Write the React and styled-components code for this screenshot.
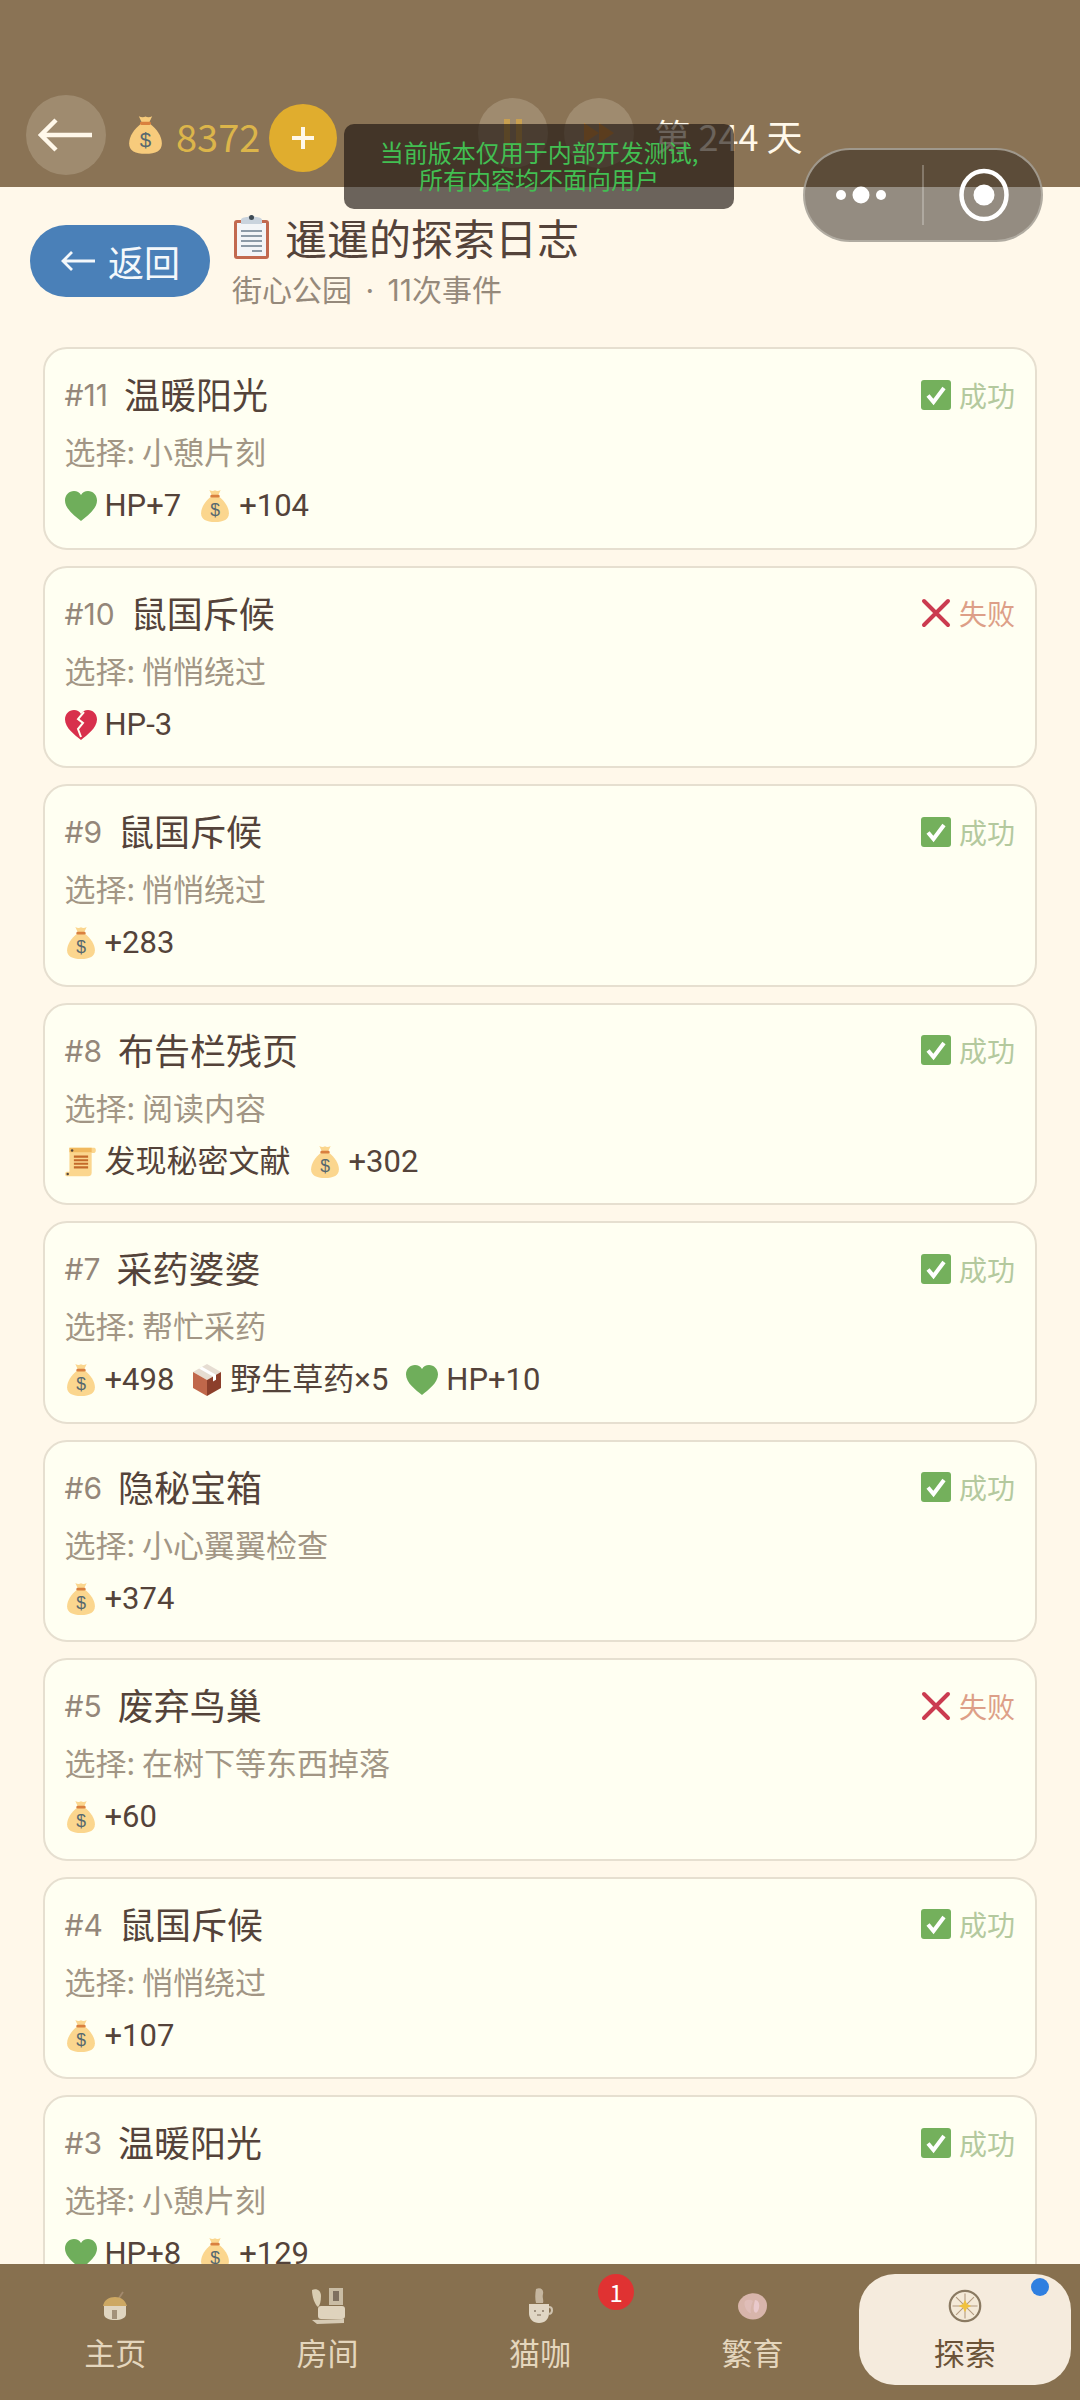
import React from 'react'
import styled, { createGlobalStyle } from 'styled-components'

const GlobalStyle = createGlobalStyle`
  html, body {
    margin: 0;
    padding: 0;
    background: #fff8ea;
  }
  * {
    box-sizing: border-box;
  }
`

const events = [
  { no: 11, title: '温暖阳光', choice: '小憩片刻', ok: true, rewards: [['heart', 'HP+7'], ['bag', '+104']] },
  { no: 10, title: '鼠国斥候', choice: '悄悄绕过', ok: false, rewards: [['broken', 'HP-3']] },
  { no: 9, title: '鼠国斥候', choice: '悄悄绕过', ok: true, rewards: [['bag', '+283']] },
  { no: 8, title: '布告栏残页', choice: '阅读内容', ok: true, rewards: [['scroll', '发现秘密文献'], ['bag', '+302']] },
  { no: 7, title: '采药婆婆', choice: '帮忙采药', ok: true, rewards: [['bag', '+498'], ['box', '野生草药×5'], ['heart', 'HP+10']] },
  { no: 6, title: '隐秘宝箱', choice: '小心翼翼检查', ok: true, rewards: [['bag', '+374']] },
  { no: 5, title: '废弃鸟巢', choice: '在树下等东西掉落', ok: false, rewards: [['bag', '+60']] },
  { no: 4, title: '鼠国斥候', choice: '悄悄绕过', ok: true, rewards: [['bag', '+107']] },
  { no: 3, title: '温暖阳光', choice: '小憩片刻', ok: true, rewards: [['heart', 'HP+8'], ['bag', '+129']] },
]

const BagIcon = ({ w = 32, h = 34, fill = '#fbd68e' }) => (
  <svg width={w} height={h} viewBox="4 2 28 33">
    <path d="M12.500 3c2 1.200 4 1.200 5.500.3 1.500.9 3.500.9 5.500-.3l-3 6.500h-5z" fill={fill} />
    <path d="M14 9.500c-5 4-9.500 10-9.500 16 0 6 5 8.500 13.500 8.500s13.500-2.500 13.500-8.500c0-6-4.500-12-9.500-16z" fill={fill} />
    <rect x="13.500" y="7.500" width="9" height="2.800" rx="1.200" fill="#d9803f" />
    <text x="18" y="28" textAnchor="middle" fontSize="17" fontFamily="'Liberation Sans', sans-serif" fill="#56686f">$</text>
  </svg>
)

const HeartIcon = () => (
  <svg width="32" height="30" viewBox="2 3 32 30">
    <path d="M18 33C12 28 2 21 2 12.500 2 7 6 3 11 3c3 0 5.600 1.500 7 4 1.400-2.500 4-4 7-4 5 0 9 4 9 9.500C34 21 24 28 18 33z" fill="#6fae5b" />
  </svg>
)

const BrokenIcon = () => (
  <svg width="32" height="30" viewBox="2 3 32 30">
    <path d="M18 33C12 28 2 21 2 12.500 2 7 6 3 11 3c3 0 5.600 1.500 7 4 1.400-2.500 4-4 7-4 5 0 9 4 9 9.500C34 21 24 28 18 33z" fill="#d8304c" />
    <path d="M21 5l-6 7 5 4-5 6 3 8" fill="none" stroke="#fffff2" strokeWidth="2" />
  </svg>
)

const ScrollIcon = () => (
  <svg width="32" height="32" viewBox="0 1 36 34">
    <path d="M5 2h28c2 0 2.500 5 0 6h-3v22c0 3-2 4-4 4H2c-2.500 0-2.500-5 0-5h3z" fill="#fbd68e" />
    <path d="M5 2h25v5H5z" fill="#f1b95e" />
    <path d="M10 12h16M10 16h16M10 20h16M10 24h16" stroke="#c46a2a" strokeWidth="2.400" />
    <circle cx="8" cy="5" r="1.400" fill="#55453a" />
    <circle cx="3" cy="31.500" r="1.400" fill="#55453a" />
  </svg>
)

const BoxIcon = () => (
  <svg width="30" height="34" viewBox="4 1 28 34">
    <path d="M18 2l14 8-14 8-14-8z" fill="#e6ddd2" />
    <path d="M4 10l14 8v16L4 26z" fill="#c0674a" />
    <path d="M32 10l-14 8v16l14-8z" fill="#8c3f2b" />
    <path d="M10 6.500l14 8v5l3-1.700v-5L13 4.800z" fill="#fff" />
  </svg>
)

const CheckIcon = () => (
  <svg width="30" height="30" viewBox="0 0 30 30">
    <rect width="30" height="30" rx="3" fill="#74b05c" />
    <path d="M7 15.500l5.500 6.500L23 8" fill="none" stroke="#fff" strokeWidth="4" />
  </svg>
)

const CrossIcon = () => (
  <svg width="30" height="30" viewBox="0 0 30 30">
    <path d="M3 3l24 24M27 3L3 27" stroke="#cb3b50" strokeWidth="4" strokeLinecap="round" />
  </svg>
)

const ClipboardIcon = () => (
  <svg width="40" height="46" viewBox="0 0 40 46">
    <rect x="2" y="6" width="35" height="39" rx="3" fill="#c2694f" />
    <rect x="5" y="9" width="29" height="33" fill="#f3f5f7" />
    <path d="M9 6c0-2 3-3 7-3 1-2 6-2 7 0 4 0 7 1 7 3v4H9z" fill="#c9d3dd" />
    <circle cx="19.500" cy="3.500" r="2.500" fill="#3f4a52" />
    <path d="M9 17h21M9 22h21M9 27h21M9 32h21M20 37h10" stroke="#8c9aa6" strokeWidth="2" />
  </svg>
)

const tabIcons = {
  home: (
    <svg width="26" height="30" viewBox="0 0 26 30">
      <path d="M21 1l-4 6" stroke="#a38a6e" strokeWidth="1.800" />
      <path d="M1 15C2 9 7 6 13 6s10 3 12 9z" fill="#cda863" />
      <path d="M2 15h22v8c0 4-5 6-11 6S2 27 2 23z" fill="#e0d5c0" />
      <rect x="10" y="19" width="5" height="9" fill="#a3917a" />
    </svg>
  ),
  room: (
    <svg width="36" height="38" viewBox="0 0 36 38">
      <rect x="19" y="1" width="14" height="17" fill="#c9bca4" />
      <rect x="23" y="4" width="6" height="10" fill="#7f7060" />
      <path d="M2 3c5-2 9 1 9 6s-1 9-3 11C5 18 2 10 2 3z" fill="#d9cdb2" />
      <rect x="8" y="19" width="27" height="13" rx="3" fill="#dfd3bd" />
      <path d="M2 33l32-1v4l-27 1z" fill="#d6cab4" />
    </svg>
  ),
  cafe: (
    <svg width="28" height="38" viewBox="0 0 28 38">
      <path d="M10 2c5-2 8 1 7 5s1 6 0 9h-7c-1-4-1-9 0-14z" fill="#c5b69f" />
      <path d="M3 17h20v9c0 6-4 10-10 10S3 32 3 26z" fill="#e0d6c4" />
      <path d="M23 20c4 0 4 6 0 7" fill="none" stroke="#cfc3af" strokeWidth="2" />
      <circle cx="9" cy="24" r="1" fill="#8a7a68" />
      <circle cx="17" cy="24" r="1" fill="#8a7a68" />
      <path d="M11 28h4" stroke="#8a7a68" strokeWidth="1.200" />
    </svg>
  ),
  breed: (
    <svg width="31" height="27" viewBox="0 0 31 27">
      <path d="M14 .5c8-1 16 4 16 12s-6 14-14 14C8 26.500 1 21 1 13 1 7 7 1.500 14 .5z" fill="#d8b5ab" />
      <path d="M18 7c3 0 5 3 4 8s-4 6-5 3 0-7 1-11z" fill="#e9c9cc" />
      <path d="M8 8c3-2 6-1 8 0-2 4-3 9-2 12-4 0-8-8-6-12z" fill="#dfbdb8" />
    </svg>
  ),
  explore: (
    <svg width="34" height="34" viewBox="0 0 38 38">
      <circle cx="19" cy="19" r="17" fill="#f4ead8" stroke="#8a7a62" strokeWidth="2.500" />
      <path d="M19 5v28M5 19h28M9 9l20 20M29 9L9 29" stroke="#b29a80" strokeWidth="1.200" />
      <path d="M19 12l2.200 4.800 4.800 2.200-4.800 2.200L19 26l-2.200-4.800L12 19l4.800-2.200z" fill="#f0c13c" />
    </svg>
  ),
}

const tabs = [
  { key: 'home', label: '主页' },
  { key: 'room', label: '房间' },
  { key: 'cafe', label: '猫咖', badge: 1 },
  { key: 'breed', label: '繁育' },
  { key: 'explore', label: '探索', active: true },
]

const rewardIcons = {
  heart: <HeartIcon />,
  broken: <BrokenIcon />,
  bag: <BagIcon />,
  scroll: <ScrollIcon />,
  box: <BoxIcon />,
}

const App = () => {
  return (
    <>
      <GlobalStyle />
      <Page>
        <TopBar>
          <RoundButton $size={80}>
            <svg width="56" height="34" viewBox="0 0 56 34">
              <path d="M54 17H4M18 2L3 17l15 15" fill="none" stroke="#fff8ea" strokeWidth="4.500" />
            </svg>
          </RoundButton>
          <Coins>
            <BagIcon w={37} h={40} fill="#f7cb7c" />
            <CoinValue>8372</CoinValue>
          </Coins>
          <PlusButton>
            <svg width="24" height="24" viewBox="0 0 24 24">
              <path d="M12 1v22M1 12h22" stroke="#fff8ea" strokeWidth="4" />
            </svg>
          </PlusButton>
          <SpeedGroup>
            <RoundButton $size={70}>
              <svg width="20" height="28" viewBox="0 0 20 28">
                <path d="M1 0h6v28H1zM13 0h6v28h-6z" fill="#c9a050" />
              </svg>
            </RoundButton>
            <RoundButton $size={70}>
              <svg width="30" height="20" viewBox="0 0 30 20">
                <path d="M0 0l15 10L0 20zM15 0l15 10-15 10z" fill="#d08a3a" />
              </svg>
            </RoundButton>
          </SpeedGroup>
          <DayLabel>第 244 天</DayLabel>
        </TopBar>

        <Toast>
          当前版本仅用于内部开发测试,
          <br />
          所有内容均不面向用户
        </Toast>

        <Capsule>
          <svg width="50" height="24" viewBox="0 0 50 24">
            <circle cx="5" cy="12" r="5" fill="#fff" />
            <circle cx="25" cy="12" r="8.500" fill="#fff" />
            <circle cx="45" cy="12" r="5" fill="#fff" />
          </svg>
          <CapsuleLine />
          <svg width="50" height="54" viewBox="0 0 50 54">
            <ellipse cx="25" cy="27" rx="22.500" ry="24" fill="none" stroke="#fff" strokeWidth="4.500" />
            <circle cx="25" cy="27" r="10.500" fill="#fff" />
          </svg>
        </Capsule>

        <Content>
          <PageHead>
            <BackButton>
              <svg width="36" height="24" viewBox="0 0 36 24">
                <path d="M35 12H3M12 3l-9 9 9 9" fill="none" stroke="#f4f8fb" strokeWidth="2.800" />
              </svg>
              返回
            </BackButton>
            <HeadText>
              <Title>
                <ClipboardIcon />
                暹暹的探索日志
              </Title>
              <SubTitle>街心公园 · 11次事件</SubTitle>
            </HeadText>
          </PageHead>

          <EventList>
            {events.map((ev) => (
              <EventCard key={ev.no}>
                <CardTop>
                  <EventNo>#{ev.no}</EventNo>
                  <EventTitle>{ev.title}</EventTitle>
                  <Result $ok={ev.ok}>
                    {ev.ok ? <CheckIcon /> : <CrossIcon />}
                    {ev.ok ? '成功' : '失败'}
                  </Result>
                </CardTop>
                <Choice>选择: {ev.choice}</Choice>
                <Rewards>
                  {ev.rewards.map(([icon, text]) => (
                    <Reward key={text}>
                      {rewardIcons[icon]}
                      {text}
                    </Reward>
                  ))}
                </Rewards>
              </EventCard>
            ))}
          </EventList>
        </Content>

        <TabBar>
          {tabs.map((tab) => (
            <Tab key={tab.key} $active={tab.active}>
              <TabIcon $active={tab.active}>{tabIcons[tab.key]}</TabIcon>
              {tab.label}
              {tab.badge && <Badge>{tab.badge}</Badge>}
              {tab.active && <BlueDot />}
            </Tab>
          ))}
        </TabBar>
      </Page>
    </>
  )
}

const fontStack = `"Noto Sans CJK SC", "Noto Sans", sans-serif`
const latinStack = `Inter, "Noto Sans CJK SC", sans-serif`
const rewardStack = `Roboto, "Noto Sans CJK SC", sans-serif`

const Page = styled.div`
  position: relative;
  width: 1080px;
  height: 2400px;
  display: flex;
  flex-direction: column;
  overflow: hidden;
  background: #fff8ea;
  font-family: ${fontStack};
`

const TopBar = styled.div`
  flex: none;
  height: 187px;
  padding: 95px 0 0 26px;
  display: flex;
  align-items: flex-start;
  background: #8a7355;
`

const RoundButton = styled.div`
  width: ${(p) => p.$size}px;
  height: ${(p) => p.$size}px;
  border-radius: 50%;
  display: flex;
  align-items: center;
  justify-content: center;
  background: rgba(255, 248, 234, 0.18);
`

const Coins = styled.div`
  margin-left: 21px;
  height: 80px;
  display: flex;
  align-items: center;
  gap: 12px;
`

const CoinValue = styled.span`
  font-size: 38px;
  color: #dcb54a;
`

const PlusButton = styled.div`
  width: 68px;
  height: 68px;
  margin: 9px 0 0 9px;
  border-radius: 50%;
  display: flex;
  align-items: center;
  justify-content: center;
  background: #e0ad2e;
`

const SpeedGroup = styled.div`
  margin: 3px 0 0 141px;
  display: flex;
  gap: 16px;
`

const DayLabel = styled.span`
  margin-left: 20px;
  height: 80px;
  line-height: 80px;
  font-size: 36px;
  white-space: pre;
  color: #fff8ea;
`

const Toast = styled.div`
  position: absolute;
  left: 344px;
  top: 124px;
  width: 390px;
  height: 85px;
  padding-top: 14px;
  border-radius: 10px;
  background: rgba(30, 22, 16, 0.66);
  color: #42bf52;
  font-size: 24px;
  line-height: 27px;
  text-align: center;
`

const Capsule = styled.div`
  position: absolute;
  left: 803px;
  top: 148px;
  width: 240px;
  height: 94px;
  padding: 0 32px 0 31px;
  border: 2px solid rgba(190, 185, 175, 0.7);
  border-radius: 47px;
  display: flex;
  align-items: center;
  justify-content: space-between;
  background: rgba(50, 40, 32, 0.52);
`

const CapsuleLine = styled.div`
  width: 2px;
  height: 60px;
  background: rgba(255, 255, 255, 0.25);
`

const Content = styled.div`
  flex: 1;
  min-height: 0;
  overflow: hidden;
  padding: 0 43px;
`

const PageHead = styled.div`
  height: 160px;
  margin-left: -13px;
  padding-top: 23px;
  display: flex;
  align-items: flex-start;
  gap: 22px;
`

const BackButton = styled.div`
  width: 180px;
  height: 72px;
  margin-top: 15px;
  border-radius: 36px;
  display: flex;
  align-items: center;
  justify-content: center;
  gap: 12px;
  background: #4a80b8;
  color: #f4f8fb;
  font-size: 36px;
`

const HeadText = styled.div`
  display: flex;
  flex-direction: column;
`

const Title = styled.div`
  display: flex;
  align-items: center;
  gap: 13px;
  font-size: 42px;
  line-height: 54px;
  color: #54433a;
`

const SubTitle = styled.div`
  margin-top: 4px;
  font-family: ${latinStack};
  font-size: 30px;
  line-height: 44px;
  word-spacing: 5px;
  color: #95897b;
`

const EventList = styled.div`
  display: flex;
  flex-direction: column;
  gap: 16px;
`

const EventCard = styled.div`
  flex: none;
  height: 202.500px;
  padding: 19px 20px 0 19.500px;
  border: 2.500px solid #e6dfd0;
  border-radius: 24px;
  background: #fffff2;
`

const CardTop = styled.div`
  height: 50px;
  display: flex;
  align-items: center;
`

const EventNo = styled.span`
  margin-right: 16px;
  padding-top: 4px;
  font-family: ${latinStack};
  font-size: 30px;
  color: #94877a;
`

const EventTitle = styled.span`
  flex: 1;
  font-size: 36px;
  color: #54433a;
`

const Result = styled.span`
  display: flex;
  align-items: center;
  gap: 8px;
  padding-top: 3px;
  font-size: 28px;
  color: ${(p) => (p.$ok ? '#b4c99e' : '#dd9f88')};
`

const Choice = styled.div`
  margin-top: 10px;
  font-size: 31px;
  line-height: 46px;
  color: #a29685;
`

const Rewards = styled.div`
  margin-top: 10px;
  display: flex;
  align-items: center;
  gap: 18px;
`

const Reward = styled.span`
  display: flex;
  align-items: center;
  gap: 8px;
  font-family: ${rewardStack};
  font-size: 31px;
  line-height: 44px;
  color: #54433a;
`

const TabBar = styled.div`
  position: relative;
  z-index: 1;
  flex: none;
  height: 136px;
  padding: 10px 9px 15px 9px;
  display: grid;
  grid-template-columns: repeat(5, 1fr);
  gap: 0;
  background: #87704f;
`

const Tab = styled.div`
  position: relative;
  display: flex;
  flex-direction: column;
  align-items: center;
  justify-content: flex-start;
  border-radius: 36px;
  font-size: 31px;
  line-height: 44px;
  color: ${(p) => (p.$active ? '#6b5338' : '#e4d6bd')};
  background: ${(p) => (p.$active ? '#f5ebdd' : 'transparent')};
`

const TabIcon = styled.div`
  flex: none;
  height: 56px;
  padding-top: 8px;
  display: flex;
  align-items: center;
  justify-content: center;
  filter: ${(p) => (p.$active ? 'none' : 'blur(0.7px)')};
`

const Badge = styled.span`
  position: absolute;
  top: 0;
  right: 12px;
  width: 36px;
  height: 36px;
  border-radius: 50%;
  background: #e03232;
  color: #fff;
  font-size: 24px;
  line-height: 36px;
  text-align: center;
`

const BlueDot = styled.span`
  position: absolute;
  top: 4px;
  right: 22px;
  width: 18px;
  height: 18px;
  border-radius: 50%;
  background: #2f7fe0;
`

export default App
